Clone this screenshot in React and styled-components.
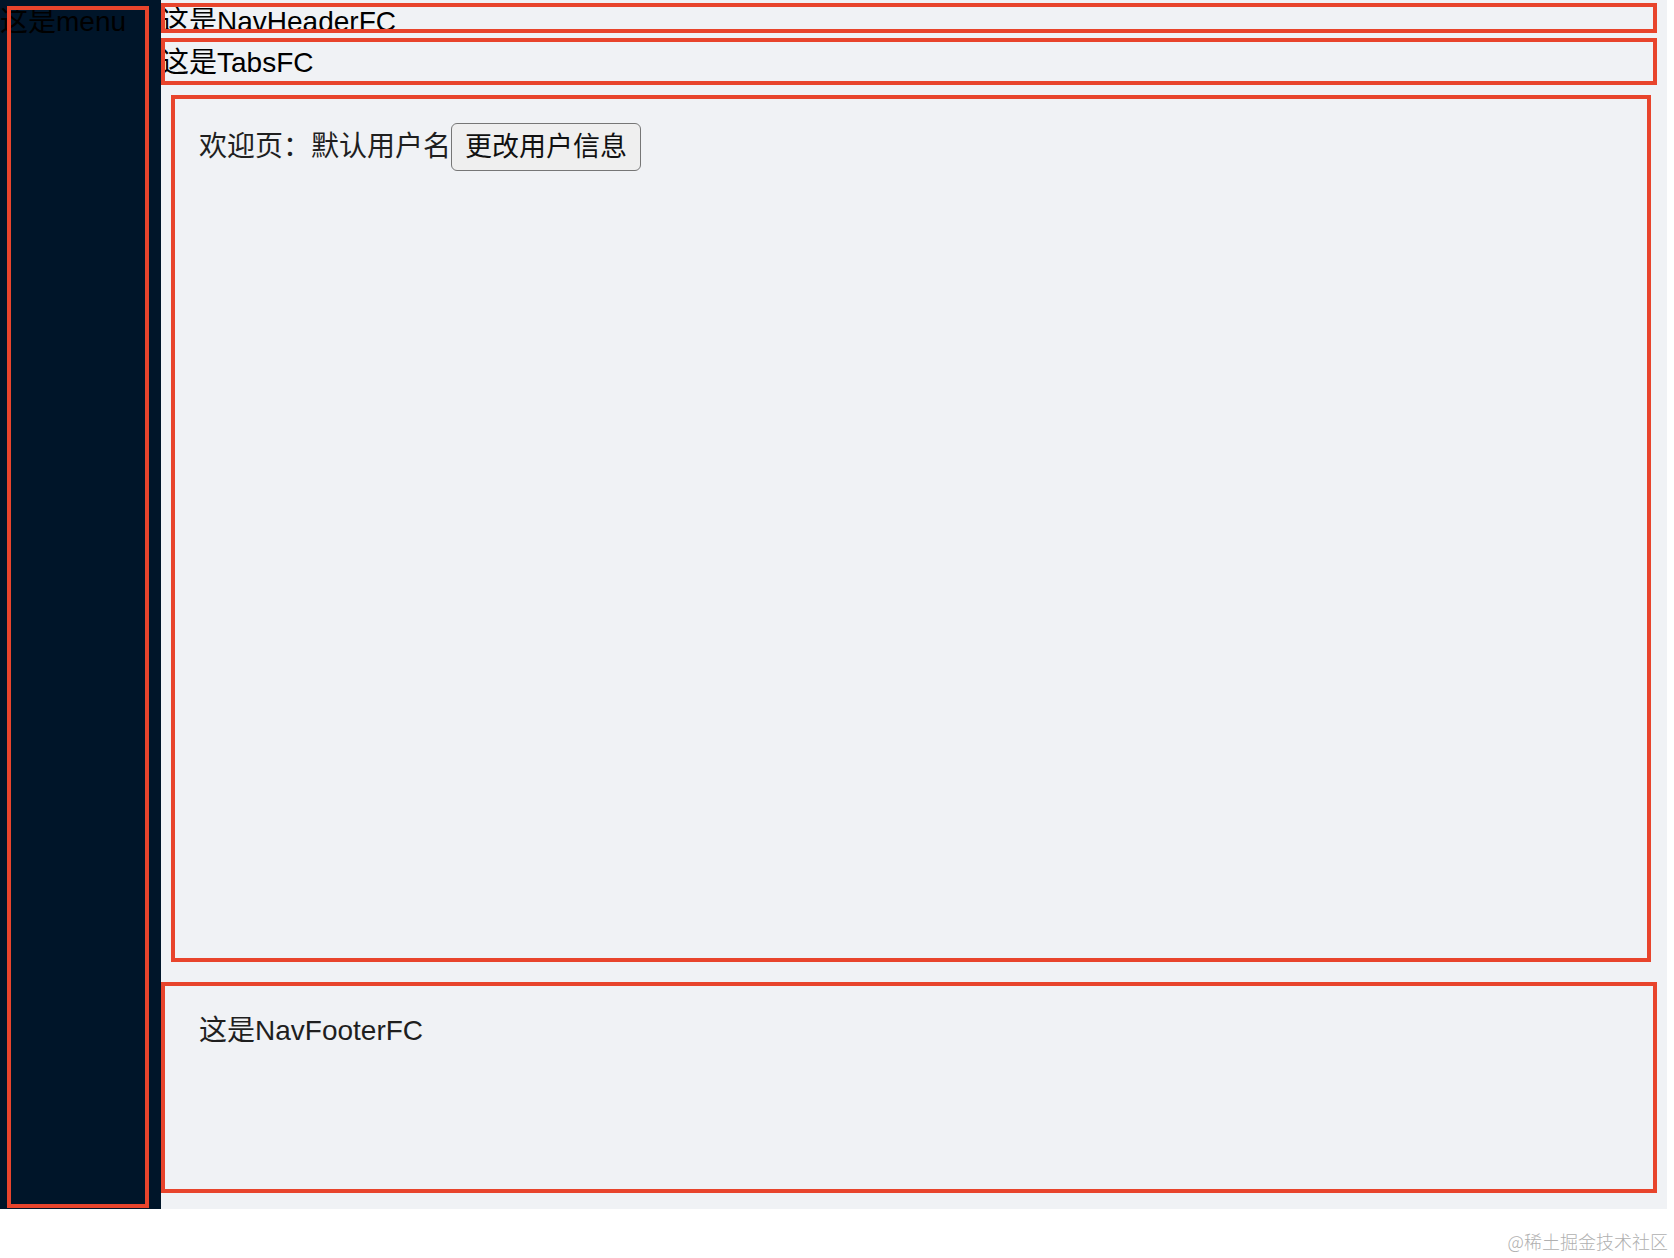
import React from "react";
import styled, { createGlobalStyle } from "styled-components";

const GlobalStyle = createGlobalStyle`
  html, body {
    margin: 0;
    padding: 0;
    background: #ffffff;
  }
  body {
    font-family: "Liberation Sans", "Noto Sans CJK SC", sans-serif;
    color: #1f1f1f;
  }
  * { box-sizing: border-box; }
`;

const Page = styled.div`
  width: 1674px;
  height: 1258px;
  display: flex;
  flex-direction: column;
  overflow: hidden;
`;

const Layout = styled.div`
  display: flex;
  width: 1667px;
  height: 1209px;
  background: #f0f2f5;
`;

const Frame = styled.div`
  position: relative;
  &::after {
    content: "";
    position: absolute;
    inset: 0;
    border: 4px solid #e8442c;
    pointer-events: none;
  }
`;

const Sider = styled.aside`
  width: 161px;
  flex: none;
  background: #001529;
  padding: 6px 12px 1px 7px;
  display: flex;
`;

const SiderFrame = styled(Frame)`
  flex: 1;
`;

const MenuLabel = styled.div`
  margin: -4px 0 0 -7px;
  font-size: 28px;
  line-height: 40px;
  color: #000000;
  white-space: nowrap;
`;

const Main = styled.main`
  flex: 1;
  display: flex;
  flex-direction: column;
  padding: 3px 10px 16px 0;
`;

const HeaderBar = styled(Frame)`
  height: 30px;
  flex: none;
  overflow: hidden;
  font-size: 28px;
  line-height: 38px;
  color: #000000;
  white-space: nowrap;
`;

const TabsBar = styled(Frame)`
  height: 47px;
  flex: none;
  margin-top: 5px;
  padding-top: 5px;
  font-size: 28px;
  line-height: 40px;
  color: #000000;
  white-space: nowrap;
`;

const ContentPanel = styled(Frame)`
  height: 867px;
  flex: none;
  margin: 10px 6px 0 10px;
  padding: 28px 28px;
`;

const WelcomeRow = styled.div`
  display: flex;
  align-items: center;
  font-size: 28px;
  line-height: 40px;
  color: #1f1f1f;
`;

const ChangeButton = styled.button`
  height: 48px;
  padding: 0 13px;
  font-family: inherit;
  font-size: 27px;
  line-height: 40px;
  color: #111111;
  background: #efefef;
  border: 1.5px solid #767676;
  border-radius: 6px;
  cursor: pointer;
`;

const FooterPanel = styled(Frame)`
  height: 211px;
  flex: none;
  margin-top: 20px;
  padding: 29px 38px;
  font-size: 28px;
  line-height: 40px;
  color: #1f1f1f;
`;

const WatermarkBar = styled.div`
  flex: 1;
  display: flex;
  justify-content: flex-end;
  padding: 20px 6px 0 0;
`;

const Watermark = styled.span`
  font-family: "Noto Sans CJK SC", sans-serif;
  font-weight: 300;
  font-size: 18px;
  line-height: 24px;
  color: #b0b0b0;
`;

export default function App() {
  return (
    <>
      <GlobalStyle />
      <Page>
        <Layout>
          <Sider>
            <SiderFrame>
              <MenuLabel>这是menu</MenuLabel>
            </SiderFrame>
          </Sider>
          <Main>
            <HeaderBar>这是NavHeaderFC</HeaderBar>
            <TabsBar>这是TabsFC</TabsBar>
            <ContentPanel>
              <WelcomeRow>
                <span>欢迎页：默认用户名</span>
                <ChangeButton type="button">更改用户信息</ChangeButton>
              </WelcomeRow>
            </ContentPanel>
            <FooterPanel>这是NavFooterFC</FooterPanel>
          </Main>
        </Layout>
        <WatermarkBar>
          <Watermark>@稀土掘金技术社区</Watermark>
        </WatermarkBar>
      </Page>
    </>
  );
}
